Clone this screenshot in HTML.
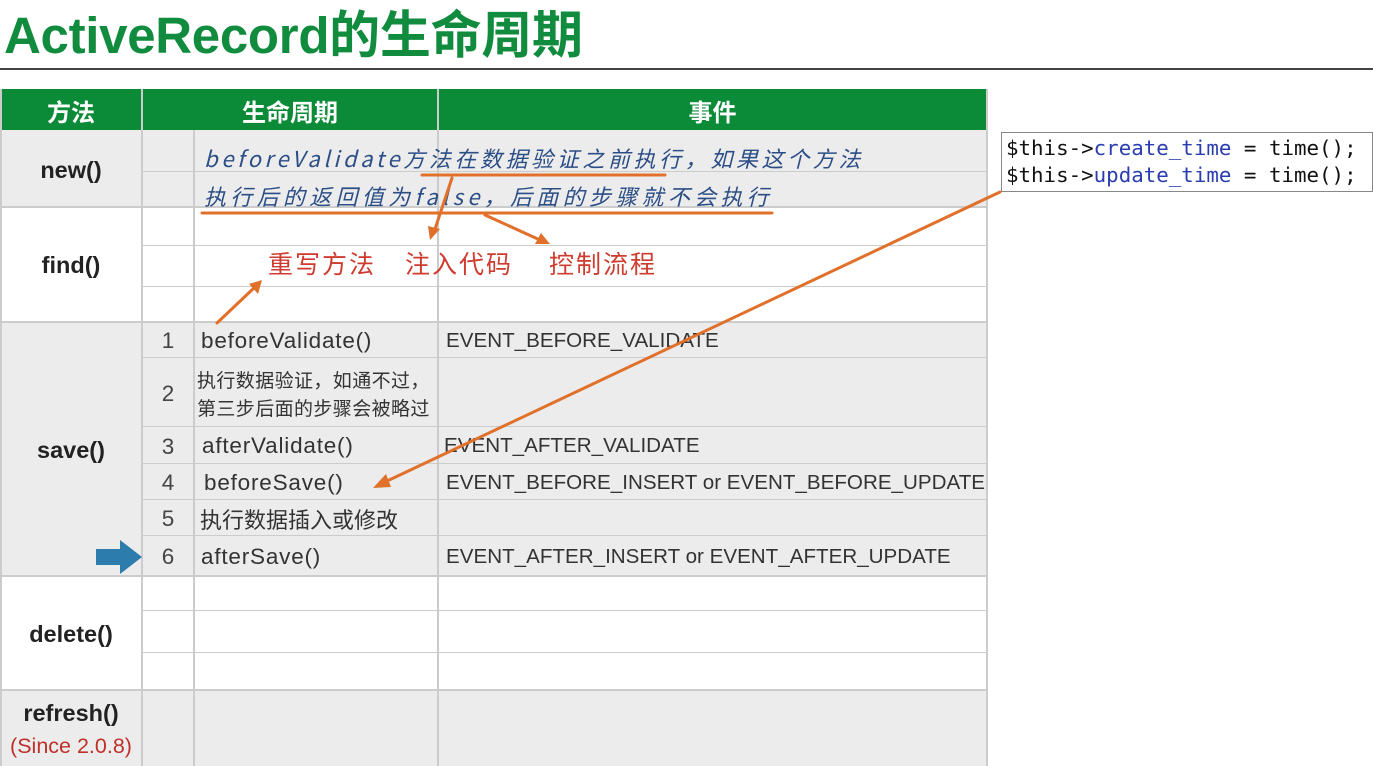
<!DOCTYPE html>
<html><head><meta charset="utf-8"><style>
*{margin:0;padding:0;box-sizing:border-box}
body{width:1373px;height:766px;background:#fff;position:relative;overflow:hidden;font-family:"Liberation Sans","Noto Sans CJK SC",sans-serif}
.a{position:absolute}
.c{position:absolute;display:flex;align-items:center;justify-content:center;color:#222}
.l{position:absolute;display:flex;align-items:center;color:#333;font-size:22.5px;letter-spacing:0.8px;padding-top:3px}
.e{font-size:20.6px;letter-spacing:0}
.h{position:absolute;background:#ccc}
.hand{position:absolute;font-family:"Noto Sans CJK SC",sans-serif;font-style:italic;white-space:nowrap}
</style></head><body>
<div class="a" style="left:4px;top:-6px;font-size:51px;font-weight:bold;color:#118c3e;letter-spacing:-0.3px">ActiveRecord的生命周期</div>
<div class="a" style="left:0;top:68px;width:1373px;height:2px;background:#444"></div>

<div class="a" style="left:0;top:89px;width:987px;height:41px;background:#0b8a37"></div>
<div class="a" style="left:0;top:130px;width:987px;height:76px;background:#ececec"></div>
<div class="a" style="left:0;top:206px;width:987px;height:115px;background:#fff"></div>
<div class="a" style="left:0;top:321px;width:987px;height:254px;background:#ececec"></div>
<div class="a" style="left:0;top:575px;width:987px;height:114px;background:#fff"></div>
<div class="a" style="left:0;top:689px;width:987px;height:77px;background:#ececec"></div>

<div class="h" style="left:0;top:89px;width:2px;height:677px"></div>
<div class="h" style="left:141px;top:89px;width:2px;height:677px"></div>
<div class="h" style="left:193px;top:130px;width:2px;height:636px"></div>
<div class="h" style="left:437px;top:89px;width:2px;height:677px"></div>
<div class="h" style="left:986px;top:89px;width:2px;height:677px"></div>
<div class="h" style="left:0;top:206px;width:987px;height:2px"></div>
<div class="h" style="left:0;top:321px;width:987px;height:2px"></div>
<div class="h" style="left:0;top:575px;width:987px;height:2px"></div>
<div class="h" style="left:0;top:689px;width:987px;height:2px"></div>
<div class="h" style="left:142px;top:171px;width:845px;height:1px"></div>
<div class="h" style="left:142px;top:245px;width:845px;height:1px"></div>
<div class="h" style="left:142px;top:286px;width:845px;height:1px"></div>
<div class="h" style="left:142px;top:357px;width:845px;height:1px"></div>
<div class="h" style="left:142px;top:426px;width:845px;height:1px"></div>
<div class="h" style="left:142px;top:463px;width:845px;height:1px"></div>
<div class="h" style="left:142px;top:499px;width:845px;height:1px"></div>
<div class="h" style="left:142px;top:535px;width:845px;height:1px"></div>
<div class="h" style="left:142px;top:610px;width:845px;height:1px"></div>
<div class="h" style="left:142px;top:652px;width:845px;height:1px"></div>

<div class="c" style="left:0;top:89px;width:142px;height:43px;color:#fff;font-size:24px;font-weight:bold">方法</div>
<div class="c" style="left:142px;top:89px;width:296px;height:43px;color:#fff;font-size:24px;font-weight:bold">生命周期</div>
<div class="c" style="left:438px;top:89px;width:549px;height:43px;color:#fff;font-size:24px;font-weight:bold">事件</div>

<div class="c" style="left:0;top:132px;width:142px;height:76px;font-size:23.5px;font-weight:bold">new()</div>
<div class="c" style="left:0;top:208px;width:142px;height:115px;font-size:23.5px;font-weight:bold">find()</div>
<div class="c" style="left:0;top:323px;width:142px;height:254px;font-size:23.5px;font-weight:bold">save()</div>
<div class="c" style="left:0;top:577px;width:142px;height:114px;font-size:23.5px;font-weight:bold">delete()</div>
<div class="c" style="left:0;top:698px;width:142px;height:30px;font-size:23.5px;font-weight:bold">refresh()</div>
<div class="c" style="left:0;top:732px;width:142px;height:28px;font-size:21.5px;color:#c0302a">(Since 2.0.8)</div>

<div class="c" style="left:142px;top:323px;width:52px;height:36px;font-size:22.5px;color:#444">1</div>
<div class="l" style="left:201px;top:321px;height:36px">beforeValidate()</div>
<div class="l e" style="left:446px;top:321px;height:36px">EVENT_BEFORE_VALIDATE</div>
<div class="c" style="left:142px;top:359px;width:52px;height:69px;font-size:22.5px;color:#444">2</div>
<div class="a" style="left:197px;top:368px;font-size:19px;letter-spacing:0.4px;line-height:28px;color:#333">执行数据验证，如通不过，<br>第三步后面的步骤会被略过</div>
<div class="c" style="left:142px;top:428px;width:52px;height:37px;font-size:22.5px;color:#444">3</div>
<div class="l" style="left:202px;top:426px;height:37px">afterValidate()</div>
<div class="l e" style="left:444px;top:426px;height:37px">EVENT_AFTER_VALIDATE</div>
<div class="c" style="left:142px;top:465px;width:52px;height:36px;font-size:22.5px;color:#444">4</div>
<div class="l" style="left:204px;top:463px;height:36px">beforeSave()</div>
<div class="l e" style="left:446px;top:463px;height:36px">EVENT_BEFORE_INSERT or EVENT_BEFORE_UPDATE</div>
<div class="c" style="left:142px;top:501px;width:52px;height:36px;font-size:22.5px;color:#444">5</div>
<div class="l" style="left:200px;top:499px;height:36px;font-size:22px;letter-spacing:0">执行数据插入或修改</div>
<div class="c" style="left:142px;top:537px;width:52px;height:40px;font-size:22.5px;color:#444">6</div>
<div class="l" style="left:201px;top:535px;height:40px">afterSave()</div>
<div class="l e" style="left:446px;top:535px;height:40px">EVENT_AFTER_INSERT or EVENT_AFTER_UPDATE</div>

<div class="a" style="left:1001px;top:132px;width:372px;height:60px;border:1px solid #888;background:#fff;font-family:'DejaVu Sans Mono','Liberation Mono',monospace;font-size:20.8px;line-height:27px;padding:2px 0 0 4px;color:#111;white-space:pre">$this-><span style="color:#2a3db0">create_time</span> = time();
$this-><span style="color:#2a3db0">update_time</span> = time();</div>

<div class="hand" style="left:204px;top:142px;font-size:22px;letter-spacing:3.6px;color:#2c4e86">beforeValidate方法在数据验证之前执行，如果这个方法</div>
<div class="hand" style="left:204px;top:180px;font-size:22px;letter-spacing:4.3px;color:#2c4e86">执行后的返回值为false，后面的步骤就不会执行</div>
<div class="hand" style="left:268px;top:245px;font-size:25px;letter-spacing:2px;color:#cf3b2e;font-style:normal">重写方法</div>
<div class="hand" style="left:405px;top:245px;font-size:25px;letter-spacing:2px;color:#cf3b2e;font-style:normal">注入代码</div>
<div class="hand" style="left:549px;top:245px;font-size:25px;letter-spacing:2px;color:#cf3b2e;font-style:normal">控制流程</div>

<svg class="a" style="left:0;top:0" width="1373" height="766">
<g stroke="#e0702a" stroke-width="3" fill="none" stroke-linecap="round">
<line x1="422" y1="175" x2="665" y2="175"/>
<line x1="202" y1="213" x2="772" y2="213"/>
<line x1="452" y1="178" x2="434" y2="232"/>
<line x1="485" y1="215" x2="540" y2="240"/>
<line x1="217" y1="323" x2="255" y2="287"/>
<line x1="1000" y1="192" x2="385" y2="482"/>
</g>
<g fill="#e0702a">
<polygon points="430,240 428,226 440,229"/>
<polygon points="550,244 535,244 541,233"/>
<polygon points="262,280 258,294 249,284"/>
<polygon points="373,488 386,474 391,487"/>
</g>
<polygon fill="#2d7cae" points="96,549 120,549 120,540 142,557 120,574 120,565 96,565"/>
</svg>
</body></html>
